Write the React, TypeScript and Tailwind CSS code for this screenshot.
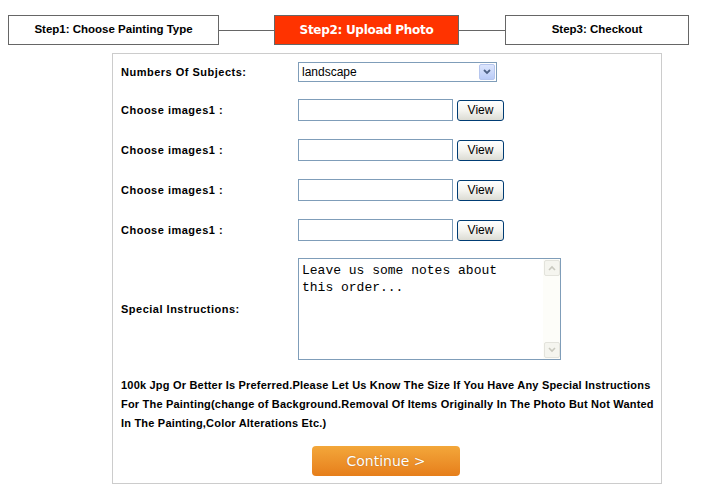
import React from 'react';

const labelCls = "w-[177px] shrink-0 text-[11px] font-bold text-black tracking-[0.5px]";

const ImageRow: React.FC = () => (
    <div className="flex items-center h-[22px]">
        <span className={labelCls}>Choose images1 :</span>
        <div className="w-[155px] h-[22px] border border-[#7f9db9] bg-white" />
        <button className="ml-[4px] w-[47px] h-[21px] rounded-[3px] border border-[#003c74] bg-gradient-to-b from-white via-[#f4f4f0] to-[#dcdcd4] text-[12px] text-black leading-none">
            View
        </button>
    </div>
);

const ScrollBtn: React.FC<{ up?: boolean }> = ({ up }) => (
    <div className="w-[16px] h-[16px] rounded-[2px] border border-[#e3e3dc] bg-[#f5f5ef] flex items-center justify-center">
        <svg width="8" height="6" viewBox="0 0 8 6">
            <path d={up ? "M1 5 L4 2 L7 5" : "M1 1 L4 4 L7 1"} stroke="#c9c9bf" strokeWidth="1.6" fill="none" />
        </svg>
    </div>
);

export default function App() {
    return (
        <div className="w-[706px] h-[495px] bg-white font-['Liberation_Sans',Arial,sans-serif]">
            {/* steps */}
            <div className="flex items-center pt-[15px] pl-[8px]">
                <div className="w-[211px] h-[30px] border border-[#666] flex items-center justify-center text-[11.5px] font-bold text-black">
                    Step1: Choose Painting Type
                </div>
                <div className="w-[55px] h-px bg-[#666]" />
                <div className="w-[185px] h-[30px] border border-[#666] bg-[#ff3300] flex items-center justify-center text-[12px] font-bold text-white font-['DejaVu_Sans',Verdana,sans-serif] tracking-[-0.3px]">
                    Step2: Upload Photo
                </div>
                <div className="w-[46px] h-px bg-[#666]" />
                <div className="w-[184px] h-[30px] border border-[#666] flex items-center justify-center text-[11.5px] font-bold text-black">
                    Step3: Checkout
                </div>
            </div>

            {/* panel */}
            <div className="ml-[112px] mt-[8px] w-[550px] h-[431px] border border-[#cccccc] px-[8px] pt-[8px]">
                <div className="flex items-center h-[20px]">
                    <span className={labelCls}>Numbers Of Subjects:</span>
                    <div className="w-[199px] h-[20px] border border-[#7f9db9] bg-white flex items-center justify-between pl-[3px] pr-[1px]">
                        <span className="text-[12px] text-black">landscape</span>
                        <div className="w-[16px] h-[16px] rounded-[2px] border border-[#b6c6ee] bg-gradient-to-b from-[#dde6fd] to-[#b9cbf7] flex items-center justify-center">
                            <svg width="8" height="6" viewBox="0 0 8 6">
                                <path d="M1 1 L4 4 L7 1" stroke="#4d6185" strokeWidth="1.8" fill="none" />
                            </svg>
                        </div>
                    </div>
                </div>

                <div className="mt-[17px] flex flex-col gap-[18px]">
                    <ImageRow />
                    <ImageRow />
                    <ImageRow />
                    <ImageRow />
                </div>

                <div className="mt-[17px] flex items-center">
                    <span className={labelCls}>Special Instructions:</span>
                    <div className="w-[263px] h-[102px] border border-[#7f9db9] bg-white flex">
                        <div className="flex-1 pl-[3px] pt-[3px] font-['Liberation_Mono','Courier_New',monospace] text-[13px] leading-[17px] text-black">
                            Leave us some notes about<br />this order...
                        </div>
                        <div className="w-[17px] bg-[#fdfdf9] flex flex-col justify-between items-center py-[1px]">
                            <ScrollBtn up />
                            <ScrollBtn />
                        </div>
                    </div>
                </div>

                <p className="mt-[16px] mr-[-6px] text-[11px] font-bold leading-[19px] text-black tracking-[0.2px]">
                    100k Jpg Or Better Is Preferred.Please Let Us Know The Size If You Have Any Special Instructions For The Painting(change of Background.Removal Of Items Originally In The Photo But Not Wanted In The Painting,Color Alterations Etc.)
                </p>

                <div className="mt-[13px] flex justify-center">
                    <button className="ml-[-2px] w-[148px] h-[30px] rounded-[4px] bg-gradient-to-b from-[#f3a73a] to-[#e67e1a] text-white text-[14px] font-['DejaVu_Sans',Verdana,sans-serif] [text-shadow:0_0_1px_rgba(120,60,0,0.5)]">
                        Continue &gt;
                    </button>
                </div>
            </div>
        </div>
    );
}
